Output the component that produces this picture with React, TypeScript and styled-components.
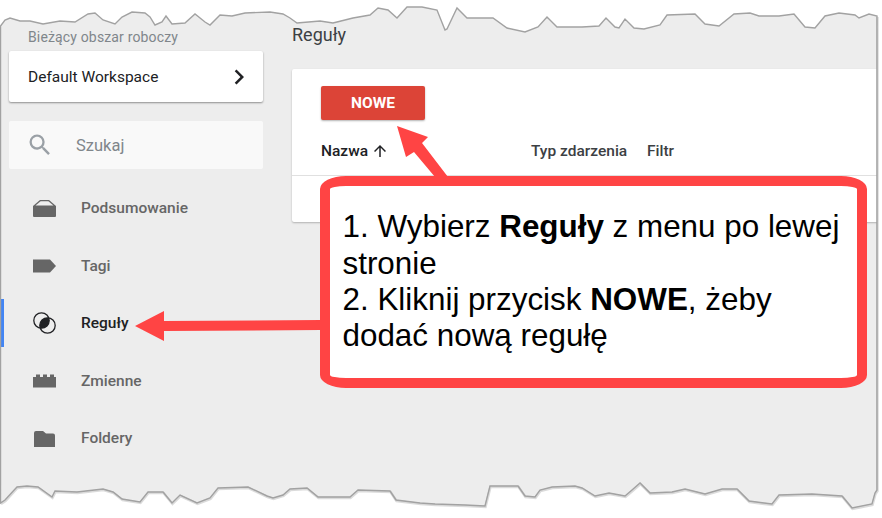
import React from 'react'
import styled, { createGlobalStyle } from 'styled-components'

const GlobalStyle = createGlobalStyle`
  html, body {
    margin: 0;
    padding: 0;
    background: #fff;
    font-family: Roboto, 'Liberation Sans', sans-serif;
  }
`

const TORN_TOP =
  '0.5,26 5,20 10,18 20,21 30,21 43,24 60,21 75,22 88,14 95,13 103,20 115,24 122,17 132,12 145,13 150,17 155,25 162,22 166,16 172,24 185,23 195,14 205,22 210,25 220,15 232,16 245,13 270,12 283,14 290,18 297,23 320,21 333,23 353,18 370,15 378,8 388,10 397,18 407,7 422,7 437,10 445,30 447,29 457,8 467,18 493,18 507,28 525,32 538,27 547,17 557,27 582,27 599,26 606,18 615,27 619,28 625,19 634,28 644,29 660,25 667,15 695,14 705,24 719,26 734,14 750,13 759,16 779,16 794,14 805,27 815,28 825,16 839,13 855,15 859,18 869,14 877,16'

const TORN_BOTTOM =
  '877,490 875,493 872,504 852,508 842,496 812,494 779,495 772,504 749,501 737,489 722,489 705,494 685,489 672,492 650,493 640,483 632,490 625,496 609,493 595,496 582,488 575,486 552,487 540,490 535,497 525,496 518,486 490,486 485,506 465,505 435,504 420,503 396,500 390,491 358,490 350,497 318,497 307,488 290,489 283,495 273,498 267,496 248,487 218,488 210,498 197,503 180,495 172,503 163,492 148,492 140,502 122,499 113,492 103,489 77,492 55,491 52,497 38,487 27,486 17,487 5,500 0.5,503'

const Page = styled.div`
  position: relative;
  display: flex;
  width: 882px;
  height: 518px;
  overflow: hidden;
  background: #ededed;
`

const Sidebar = styled.aside`
  flex: none;
  box-sizing: border-box;
  width: 292px;
  padding-top: 29px;
`

const WorkspaceLabel = styled.div`
  margin-left: 28px;
  margin-bottom: 6px;
  font-size: 14px;
  line-height: 16px;
  letter-spacing: 0.15px;
  color: #80868b;
`

const WorkspaceCard = styled.div`
  display: flex;
  align-items: center;
  justify-content: space-between;
  box-sizing: border-box;
  width: 254px;
  height: 51px;
  margin-left: 9px;
  padding: 0 9px 0 19px;
  border-radius: 2px;
  background: #fff;
  box-shadow: 0 1px 2px rgba(0, 0, 0, 0.4);
  font-size: 15.5px;
  color: #202124;
`

const SearchBox = styled.div`
  display: flex;
  align-items: center;
  gap: 22px;
  box-sizing: border-box;
  width: 254px;
  height: 48px;
  margin: 19px 0 15px 9px;
  padding-left: 17px;
  border-radius: 2px;
  background: #f9f9f9;
  font-size: 16.5px;
  color: #80868b;
`

const NavList = styled.nav`
  display: flex;
  flex-direction: column;
  gap: 9.5px;
`

const NavItem = styled.div<{ $active?: boolean }>`
  display: flex;
  align-items: center;
  gap: 25px;
  box-sizing: border-box;
  height: 48px;
  margin-left: 1px;
  padding-left: ${({ $active }) => ($active ? '29px' : '32px')};
  border-left: ${({ $active }) => ($active ? '3px solid #4285f4' : 'none')};
  font-size: 15.5px;
  font-weight: 500;
  color: ${({ $active }) => ($active ? '#202124' : '#666')};
`

const NavIcon = styled.svg`
  flex: none;
  width: 23px;
  height: 24px;
`

const Main = styled.main`
  flex: 1;
  padding-top: 25px;
`

const Title = styled.h1`
  margin: 0 0 24px;
  font-size: 18px;
  font-weight: 400;
  line-height: 20px;
  color: #3c4043;
`

const TableCard = styled.section`
  box-sizing: border-box;
  height: 153px;
  padding-top: 17px;
  border-radius: 2px 0 0 2px;
  background: #fff;
  box-shadow: 0 1px 2px rgba(0, 0, 0, 0.25);
`

const NewButton = styled.button`
  display: block;
  width: 104px;
  height: 34px;
  margin-left: 29px;
  padding: 0;
  border: none;
  border-radius: 2px;
  background: #dc4437;
  box-shadow: 0 1px 2px rgba(0, 0, 0, 0.3);
  font-family: inherit;
  font-size: 15.5px;
  font-weight: 700;
  color: #fff;
`

const HeaderRow = styled.div`
  display: grid;
  grid-template-columns: 210px 116px auto;
  align-items: center;
  height: 48px;
  margin-top: 7px;
  padding-left: 29px;
  border-bottom: 1px solid #e0e0e0;
`

const HeaderCell = styled.div<{ $sorted?: boolean }>`
  display: flex;
  align-items: center;
  gap: 3px;
  font-size: 15.5px;
  font-weight: 500;
  color: ${({ $sorted }) => ($sorted ? '#202124' : '#3c4043')};
`

const TornEdge = styled.svg`
  position: absolute;
  inset: 0;
  width: 882px;
  height: 518px;
  pointer-events: none;
`

const Arrows = styled.svg`
  position: absolute;
  inset: 0;
  width: 882px;
  height: 518px;
  pointer-events: none;
`

const Callout = styled.div`
  position: absolute;
  left: 320px;
  top: 176px;
  display: flex;
  flex-direction: column;
  justify-content: center;
  box-sizing: border-box;
  width: 547px;
  height: 212px;
  padding: 0 0 0 12.5px;
  border: 10px solid #ff4444;
  border-radius: 26px / 13px;
  background: #fff;
  font-family: 'Liberation Sans', Arial, sans-serif;
  font-size: 31.4px;
  line-height: 36.4px;
  color: #000;
`

const navItems = [
  {
    label: 'Podsumowanie',
    icon: (
      <>
        <path d="M0 10 L7 4 H16 L23 10 V20 Q23 21 22 21 H1 Q0 21 0 20 Z" fill="#666" />
        <path d="M2.5 9.6 L7.6 5.3 H15.4 L20.5 9.6 Z" fill="#eee" />
      </>
    ),
  },
  { label: 'Tagi', icon: <path d="M0 5.5 H17 L23 12 L17 18.5 H0 Z" fill="#666" /> },
  {
    label: 'Reguły',
    active: true,
    icon: (
      <>
        <circle cx="8.5" cy="9.5" r="7.7" fill="none" stroke="#202124" strokeWidth="1.3" />
        <circle cx="14.5" cy="14.5" r="7.7" fill="none" stroke="#202124" strokeWidth="1.3" />
        <path d="M15.75 6.9 A7.7 7.7 0 0 1 7.25 17.1 A7.7 7.7 0 0 1 15.75 6.9 Z" fill="#202124" />
      </>
    ),
  },
  {
    label: 'Zmienne',
    icon: <path d="M0 8 H3 V5.5 H7 V8 H10 V5.5 H14 V8 H17 V5.5 H21 V8 H23 V18.5 H0 Z" fill="#666" />,
  },
  {
    label: 'Foldery',
    icon: <path d="M1 7 Q1 5 3 5 H10 L13 7.5 H20 Q22 7.5 22 9.5 V21 H1 Z" fill="#666" />,
  },
]

const App: React.FC = () => {
  const hole = `M${TORN_TOP.split(' ').join(' L')} L${TORN_BOTTOM.split(' ').join(' L')} Z`

  return (
    <Page>
      <GlobalStyle />
      <Sidebar>
        <WorkspaceLabel>Bieżący obszar roboczy</WorkspaceLabel>
        <WorkspaceCard>
          Default Workspace
          <svg width="30" height="30" viewBox="0 0 24 24" fill="#202124">
            <path d="M10 6L8.59 7.41 13.17 12l-4.58 4.59L10 18l6-6z" />
          </svg>
        </WorkspaceCard>
        <SearchBox>
          <svg width="28" height="28" viewBox="0 0 24 24" fill="#9aa0a6">
            <path d="M15.5 14h-.79l-.28-.27A6.471 6.471 0 0 0 16 9.5 6.5 6.5 0 1 0 9.5 16c1.61 0 3.09-.59 4.23-1.57l.27.28v.79l5 4.99L20.49 19l-4.99-5zm-6 0C7.01 14 5 11.99 5 9.5S7.01 5 9.5 5 14 7.01 14 9.5 11.99 14 9.5 14z" />
          </svg>
          Szukaj
        </SearchBox>
        <NavList>
          {navItems.map((item) => (
            <NavItem key={item.label} $active={item.active}>
              <NavIcon viewBox="0 0 23 24">{item.icon}</NavIcon>
              {item.label}
            </NavItem>
          ))}
        </NavList>
      </Sidebar>

      <Main>
        <Title>Reguły</Title>
        <TableCard>
          <NewButton>NOWE</NewButton>
          <HeaderRow>
            <HeaderCell $sorted>
              Nazwa
              <svg width="18" height="18" viewBox="0 0 24 24" fill="#202124">
                <path d="M4 12l1.41 1.41L11 7.83V20h2V7.83l5.58 5.59L20 12l-8-8-8 8z" />
              </svg>
            </HeaderCell>
            <HeaderCell>Typ zdarzenia</HeaderCell>
            <HeaderCell>Filtr</HeaderCell>
          </HeaderRow>
        </TableCard>
      </Main>

      <TornEdge viewBox="0 0 882 518">
        <path d={`M0 0 H882 V518 H0 Z ${hole}`} fill="#fff" fillRule="evenodd" />
        <polyline
          points={`877,16 ${TORN_BOTTOM}`}
          transform="translate(0.5 1)"
          fill="none"
          stroke="#000"
          strokeOpacity="0.14"
          strokeWidth="2.5"
        />
        <path d={hole} fill="none" stroke="#a2a2a2" strokeWidth="1.4" />
      </TornEdge>

      <Arrows viewBox="0 0 882 518">
        <polygon points="397,126 428,137 422,143 448,177 435,177 414,152 406,157" fill="#ff4444" />
        <polygon points="135,326 164,311 164,321 321,320 321,330 164,331 164,341" fill="#ff4444" />
      </Arrows>

      <Callout>
        <div>
          1. Wybierz <b>Reguły</b> z menu po lewej
          <br />
          stronie
          <br />
          2. Kliknij przycisk <b>NOWE</b>, żeby
          <br />
          dodać nową regułę
        </div>
      </Callout>
    </Page>
  )
}

export default App
